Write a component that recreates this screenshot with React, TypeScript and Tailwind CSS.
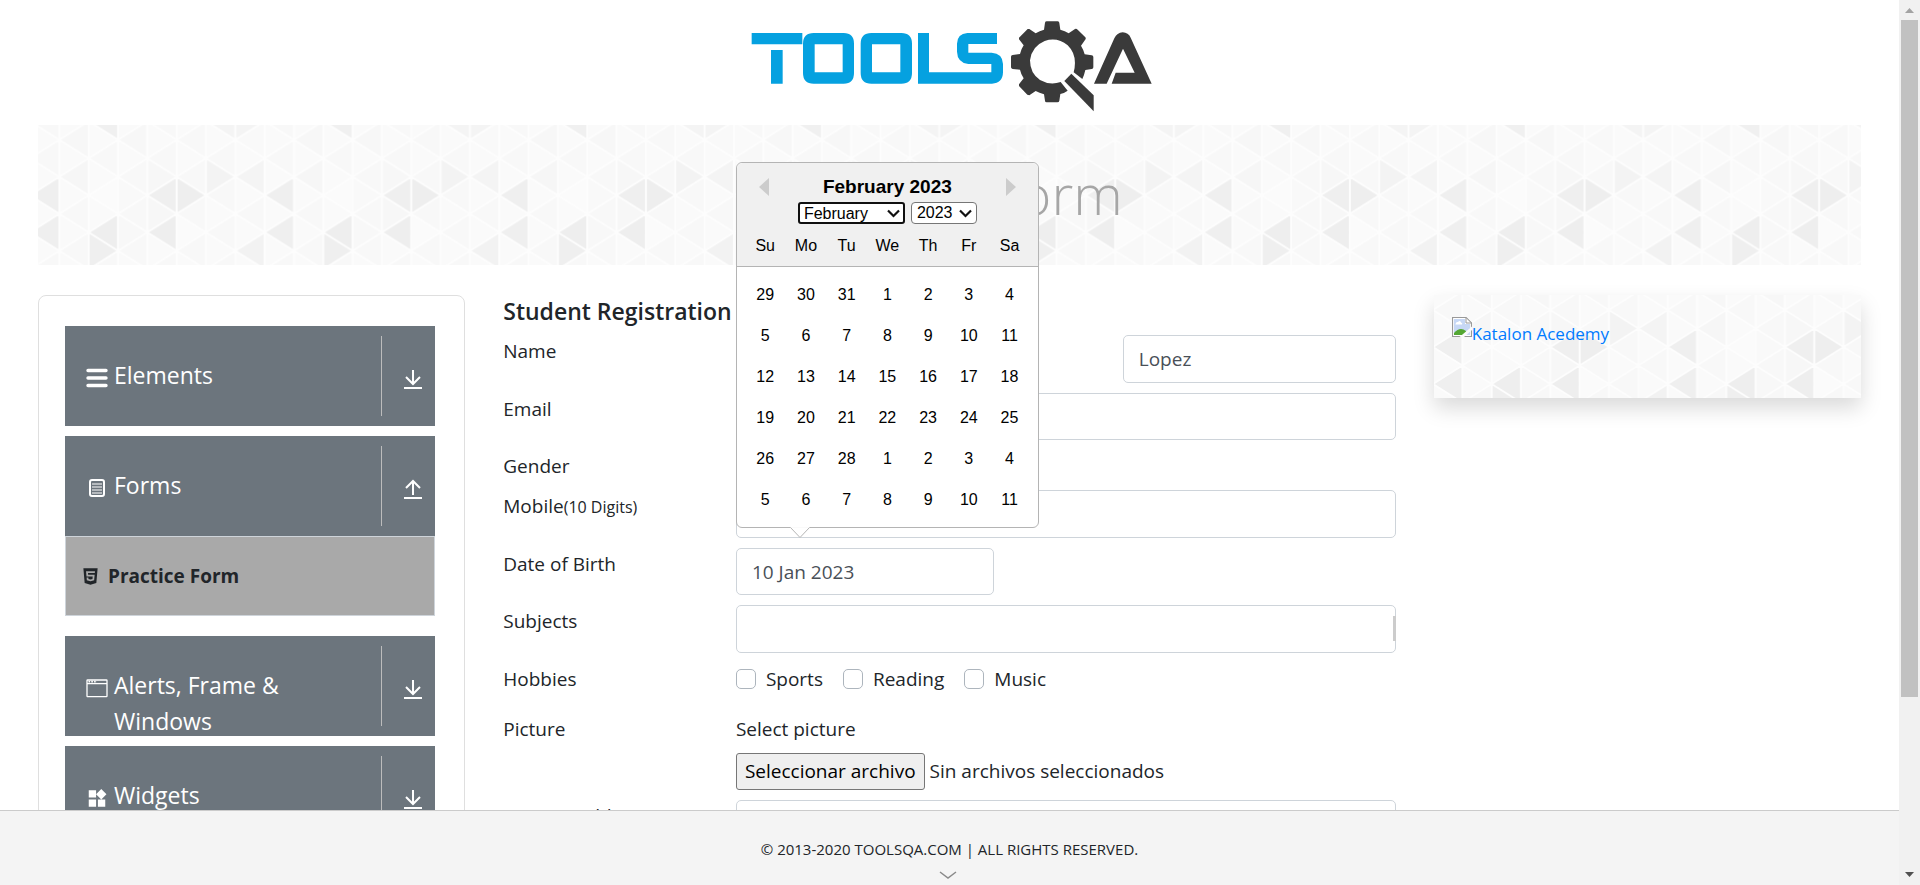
import type { ReactNode } from "react";
import { useState } from "react";
import { MdWidgets } from "react-icons/md";
import { FaHtml5 } from "react-icons/fa";

const COL = 29.33;
const HALF = 18.5;
const SHADES: Record<string, string> = {
  "2,0": "#f0f0f0", "6,0": "#f4f4f4", "7,0": "#f4f4f4",
  "0,4": "#efefef", "0,6": "#efefef", "2,6": "#eeeeee", "2,7": "#efefef",
  "4,4": "#efefef", "5,4": "#eeeeee", "4,6": "#eeeeee",
  "6,3": "#f3f3f3", "7,3": "#f4f4f4", "7,7": "#f2f2f2",
  "1,3": "#f6f6f6", "4,3": "#f7f7f7", "4,5": "#f7f7f7", "2,2": "#f8f8f8", "3,6": "#f8f8f8",
  "1,1": "#f7f7f7", "3,1": "#f7f7f7", "7,1": "#f9f9f9", "2,4": "#fbfbfb", "3,4": "#f9f9f9", "5,6": "#fbfbfb",
};

function Triangles({ id, x, y }: { id: string; x: number; y: number }) {
  const shapes: ReactNode[] = [];
  const outlines: string[] = [];
  for (let c = 0; c < 8; c++) {
    for (let n = 0; n <= 8; n++) {
      const left = (n + c) % 2 === 0;
      const apex = (left ? c : c + 1) * COL;
      const base = (left ? c + 1 : c) * COL;
      const shade = SHADES[`${c},${n}`] ?? (left ? "#f8f8f8" : "#fafafa");
      const d = `M${apex} ${n * HALF}L${base} ${(n - 1) * HALF}V${(n + 1) * HALF}Z`;
      outlines.push(d);
      shapes.push(<path key={`${c}-${n}`} fill={shade} d={d} />);
    }
  }
  return (
    <svg className="absolute inset-0 h-full w-full" aria-hidden="true">
      <defs>
        <pattern id={id} patternUnits="userSpaceOnUse" x={x} y={y} width={COL * 8} height={HALF * 8}>
          {shapes}
          <path d={outlines.join("")} fill="none" stroke="#fdfdfd" strokeWidth="2" strokeLinejoin="round" />
        </pattern>
      </defs>
      <rect width="100%" height="100%" fill={`url(#${id})`} />
    </svg>
  );
}

function Logo() {
  return (
    <svg viewBox="0 0 1380 375" className="h-[125px] w-[460px]" role="img" aria-label="Tools QA">
      <g fill="#05a1e0">
        <path d="M95 99H247V133H95ZM153 150H188V251H153Z" />
        <path fillRule="evenodd" d="M281 99H371Q402 99 402 131V219Q402 251 371 251H281Q249 251 249 219V131Q249 99 281 99ZM284 133V217H368V133Z" />
        <path fillRule="evenodd" d="M454 99H544Q576 99 576 131V219Q576 251 544 251H454Q422 251 422 219V131Q422 99 454 99ZM456 133V217H541V133Z" />
        <path d="M594 99H627V217H814V192H745Q712 188 711 155V131Q712 101 742 99H831V132H745V158H815Q848 160 849 192V217Q848 250 816 251H594Z" />
      </g>
      <g fill="#3a3a3a">
        <path fillRule="evenodd" d="M975 68Q976 64 980 64H1013Q1018 64 1018 69L1021 89Q1035 93 1046 100L1065 87Q1069 85 1073 89L1096 112Q1099 116 1095 120L1083 137Q1090 148 1094 163L1115 166Q1120 167 1120 171V202Q1120 207 1115 207L1096 210Q1093 224 1087 237L1061 217Q1074 166 1043 136Q1012 110 974 123Q935 139 930 181Q930 220 960 240Q990 257 1022 246L1043 272Q1032 280 1021 282L1018 302Q1017 307 1012 307H980Q975 307 975 302L972 283Q958 279 947 273L928 286L922 284L897 258V253L911 235Q903 223 900 209L878 207Q873 206 873 202V170Q873 166 878 165L900 162Q903 148 911 136L897 118V113L923 87H928L947 100Q959 93 972 89Z" />
        <path d="M1054 221L1121 286V334L1033 243Z" />
        <path d="M1122 251L1183 115Q1191 98 1208 97Q1225 98 1232 113L1295 251H1175L1187 218H1244L1209 146L1160 251Z" />
      </g>
    </svg>
  );
}

function ElementsIcon() {
  return (
    <svg width="22" height="20" viewBox="0 0 22 20" fill="none" stroke="#fff" strokeWidth="3.4" strokeLinecap="round">
      <path d="M2 2.500H20M2 10H20M2 17.500H20" />
    </svg>
  );
}

function FormsIcon() {
  return (
    <svg width="22" height="20" viewBox="0 0 22 20" fill="none" stroke="#fff">
      <rect x="4" y="2" width="14" height="16" rx="2" strokeWidth="2" />
      <path d="M6 6H16M6 9H16M6 12H16M6 15H16" strokeWidth="1.1" />
    </svg>
  );
}

function WindowIcon() {
  return (
    <svg width="22" height="20" viewBox="0 0 22 20" fill="none" stroke="#fff" strokeWidth="1.3">
      <rect x="1" y="2" width="20" height="16.6" rx="0.6" />
      <path d="M1 5.6H21" />
      <path d="M2.5 3.6H11" strokeWidth="1.6" strokeDasharray="1.6 1.2" />
    </svg>
  );
}

function ArrowIcon({ up = false }: { up?: boolean }) {
  return (
    <svg width="18" height="20" viewBox="0 0 18 20" fill="none" stroke="#fff" strokeWidth="2">
      <path d={up ? "M9 16V2M2 9L9 2L16 9" : "M9 1V15M2 8L9 15L16 8"} />
      <path d="M0 19H18" />
    </svg>
  );
}

function MenuGroup({ icon, title, open = false }: { icon: ReactNode; title: string; open?: boolean }) {
  return (
    <button type="button" className="flex h-[100px] w-full bg-[#6c757d] text-left text-white">
      <span className="flex flex-1 items-start gap-1.5 pl-[21px] pr-12 pt-[31px]">
        <span className="mt-2.5 flex h-[22px] w-[22px] shrink-0 items-center justify-center">{icon}</span>
        <span className="text-[23px] leading-9">{title}</span>
      </span>
      <span className="mt-2.5 flex h-20 w-[54px] shrink-0 items-center justify-center border-l border-[#bcbcbc] pl-2 pt-1.5">
        <ArrowIcon up={open} />
      </span>
    </button>
  );
}

const FIELD = "w-full rounded-[5px] border border-[#ced4da] bg-white px-[15px] text-[19px] text-[#495057] outline-none";

function Row({ label, htmlFor, small, height, children }: { label: string; htmlFor?: string; small?: string; height: string; children?: ReactNode }) {
  return (
    <div className={`grid grid-cols-4 gap-x-[38px] ${height}`}>
      <label htmlFor={htmlFor} className="h-[30px] whitespace-nowrap leading-[32px]">
        {label}
        {small && <small className="text-base">{small}</small>}
      </label>
      <div className="relative col-span-3">{children}</div>
    </div>
  );
}

function PickerSelect({ label, options, value, className }: { label: string; options: string[]; value: string; className: string }) {
  return (
    <span className="relative inline-flex">
      <select aria-label={label} defaultValue={value} className={`h-[22px] appearance-none bg-white text-base leading-5 outline-none ${className}`}>
        {options.map((o) => <option key={o}>{o}</option>)}
      </select>
      <svg className="pointer-events-none absolute right-[5px] top-[7px]" width="13" height="9" viewBox="0 0 13 9" fill="none" stroke="#111" strokeWidth="2.2">
        <path d="M1 1.5L6.500 7L12 1.500" />
      </svg>
    </span>
  );
}

const MONTHS = ["January", "February", "March", "April", "May", "June", "July", "August", "September", "October", "November", "December"];
const DAYS = [29, 30, 31, ...Array.from({ length: 28 }, (_, i) => i + 1), ...Array.from({ length: 11 }, (_, i) => i + 1)];

function Calendar() {
  return (
    <div className="absolute bottom-full left-0 z-20 mb-5 w-[303px] rounded-md border border-[#b4b4b4] bg-white font-['Liberation_Sans',Arial,sans-serif] text-base text-black">
      <div className="rounded-t-md border-b border-[#b4b4b4] bg-[#f0f0f0] pt-2.5">
        <div className="flex items-center justify-between px-[22px]">
          <button type="button" aria-label="Previous month"><svg width="10" height="18"><path d="M10 0V18L0 9Z" fill="#ccc" /></svg></button>
          <h2 className="text-[19px] font-bold leading-7">February 2023</h2>
          <button type="button" aria-label="Next month"><svg width="10" height="18"><path d="M0 0V18L10 9Z" fill="#ccc" /></svg></button>
        </div>
        <div className="mt-px flex justify-center gap-1.5">
          <PickerSelect label="Month" options={MONTHS} value="February" className="w-[107px] rounded-[3px] border-2 border-[#101010] pl-1" />
          <PickerSelect label="Year" options={["2022", "2023", "2024"]} value="2023" className="w-[66px] rounded-sm border border-[#767676] pl-[5px]" />
        </div>
        <div className="grid grid-cols-7 px-2 pb-px pt-[3px] text-center leading-[38px]">
          {["Su", "Mo", "Tu", "We", "Th", "Fr", "Sa"].map((d) => <span key={d}>{d}</span>)}
        </div>
      </div>
      <div className="grid grid-cols-7 gap-y-[5px] px-2 pb-[9px] pt-2.5">
        {DAYS.map((d, i) => <button type="button" key={i} className="h-9">{d}</button>)}
      </div>
      <svg className="absolute left-[52px] top-full" width="22" height="12" viewBox="0 0 22 12">
        <path d="M1 0L11 10.500L21 0" fill="#fff" stroke="#b4b4b4" />
        <path d="M1 -1H21V.3H1Z" fill="#eee" />
      </svg>
    </div>
  );
}

function BrokenImage() {
  return (
    <svg width="20" height="20" viewBox="0 0 20 20" className="shrink-0">
      <path d="M.5.5H14L19.500 6V19.500H.5Z" fill="#fff" stroke="#999" strokeWidth="1.200" />
      <path d="M2 2H13V7H18V18H2Z" fill="#c7d8f5" />
      <path d="M3.500 7Q4 4.500 6 5Q8 3 9 5.500Q11 6 10 7.500H3.500Z" fill="#fff" />
      <path d="M2 18V16Q8 9 14 14V18Z" fill="#54a733" />
      <path d="M14 .5V6H19.500Z" fill="#fff" stroke="#999" />
      <path d="M20 9.500V13L12 20H7.500Z" fill="#fbfbfb" />
    </svg>
  );
}

export default function App() {
  const [hobbies, setHobbies] = useState<string[]>([]);
  const toggle = (h: string) => setHobbies((s) => (s.includes(h) ? s.filter((v) => v !== h) : [...s, h]));
  return (
    <div className="flex h-screen overflow-hidden bg-white font-['Open_Sans','Noto_Sans',sans-serif] text-[19px] text-[#212529]">
      <div className="flex min-w-0 flex-1 flex-col">
        <main className="min-h-0 flex-1 overflow-hidden px-[38px]">
          <header className="flex justify-center"><a href="#home"><Logo /></a></header>
          <div className="relative flex h-[140px] items-center justify-center pb-[5px]">
            <Triangles id="banner" x={-8} y={-3.67} />
            <h1 className="relative text-[56px] font-light leading-[70px] text-[#a6a6a6]">Practice Form</h1>
          </div>
          <div className="mt-[30px] grid grid-cols-4 gap-x-[38px]">
            <nav className="h-[700px] rounded-lg border border-[#dfdfdf] pb-8 pl-[26px] pr-[29px] pt-[30px]">
              <MenuGroup icon={<ElementsIcon />} title="Elements" />
              <div className="mt-2.5"><MenuGroup icon={<FormsIcon />} title="Forms" open /></div>
              <a href="#practice-form" className="flex h-20 items-center gap-2 border border-[#ced4da] bg-[#a9a9a9] pl-[15px] font-bold">
                <FaHtml5 size={19} className="shrink-0" />
                Practice Form
              </a>
              <div className="mt-5"><MenuGroup icon={<WindowIcon />} title="Alerts, Frame & Windows" /></div>
              <div className="mt-2.5"><MenuGroup icon={<MdWidgets size={23} />} title="Widgets" /></div>
            </nav>

            <form className="col-span-2">
              <h5 className="h-10 text-[23px] font-semibold leading-8">Student Registration Form</h5>
              <div className="flex flex-col gap-2.5">
                <Row label="Name" htmlFor="lastName" height="h-12">
                  <div className="flex h-full justify-between">
                    <div className="w-[273px]"><input aria-label="First name" className={`${FIELD} h-full`} /></div>
                    <div className="w-[273px]"><input id="lastName" defaultValue="Lopez" className={`${FIELD} h-full`} /></div>
                  </div>
                </Row>
                <Row label="Email" htmlFor="email" height="h-[47px]"><input id="email" className={`${FIELD} h-full`} /></Row>
                <Row label="Gender" height="h-[30px]" />
                <Row label="Mobile" small="(10 Digits)" htmlFor="mobile" height="h-12"><input id="mobile" className={`${FIELD} h-full`} /></Row>
                <Row label="Date of Birth" htmlFor="dob" height="h-[47px]">
                  <div className="h-full w-[258px]"><input id="dob" defaultValue="10 Jan 2023" className={`${FIELD} h-full`} /></div>
                  <Calendar />
                </Row>
                <Row label="Subjects" htmlFor="subjects" height="h-12">
                  <input id="subjects" className={`${FIELD} h-full`} />
                  <span className="absolute right-0 top-[11px] h-[25px] w-[3px] bg-[#ccc]" />
                </Row>
                <Row label="Hobbies" height="h-10">
                  <div className="flex h-[32px] items-center gap-5">
                    {["Sports", "Reading", "Music"].map((h) => (
                      <label key={h} className="flex items-center gap-2.5">
                        <input type="checkbox" checked={hobbies.includes(h)} onChange={() => toggle(h)} className="h-5 w-5 appearance-none rounded-[5px] border border-[#adb5bd] bg-white checked:bg-[#007bff]" />
                        {h}
                      </label>
                    ))}
                  </div>
                </Row>
                <Row label="Picture" height="h-[77px]">
                  <span className="block h-10 leading-8">Select picture</span>
                  <div className="flex items-center gap-[5px]">
                    <button type="button" className="h-[37px] whitespace-nowrap rounded-[3px] border border-[#767676] bg-[#efefef] px-2 text-black">Seleccionar archivo</button>
                    <span className="whitespace-nowrap">Sin archivos seleccionados</span>
                  </div>
                </Row>
                <Row label="Current Address" htmlFor="address" height="h-[150px]"><textarea id="address" className={`${FIELD} h-full resize-none`} /></Row>
              </div>
            </form>

            <aside className="relative h-[103px] shadow-[0_10px_20px_rgba(0,0,0,0.15)]">
              <Triangles id="promo" x={-1} y={-22} />
              <a href="#katalon" className="relative flex items-start pl-[18px] pt-[22px] text-[17px] text-[#007bff]">
                <BrokenImage />
                <span className="pt-1">Katalon Acedemy</span>
              </a>
            </aside>
          </div>
        </main>
        <footer className="relative z-30 flex h-[75px] shrink-0 flex-col items-center border-t border-[#cbcbcb] bg-[#f4f4f4] pt-[26px] text-[15px] leading-6">
          <span>© 2013-2020 TOOLSQA.COM | ALL RIGHTS RESERVED.</span>
          <svg className="mr-1 mt-2.5" width="18" height="9" viewBox="0 0 18 9" fill="none" stroke="#8a8a8a" strokeWidth="1.5"><path d="M1 1L9 7L17 1" /></svg>
        </footer>
      </div>
      <div className="flex w-[21px] shrink-0 flex-col items-center bg-[#f1f1f1]">
        <svg width="21" height="20" viewBox="0 0 21 20"><path d="M6 13L10.500 8L15 13Z" fill="#a3a3a3" /></svg>
        <div className="h-[677px] w-[17px] bg-[#c1c1c1]" />
        <svg className="mt-auto" width="21" height="20" viewBox="0 0 21 20"><path d="M6 7H15L10.500 12Z" fill="#505050" /></svg>
      </div>
    </div>
  );
}
